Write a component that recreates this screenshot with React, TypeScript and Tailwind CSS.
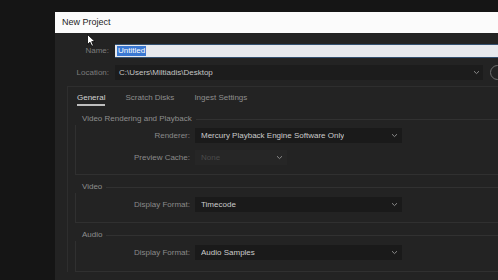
import React from "react";

const line = "bg-[#313131]";

const Chevron = () => (
  <svg width="7" height="5" viewBox="0 0 7 5" className="shrink-0">
    <path d="M1 1.2 L3.5 3.6 L6 1.2" fill="none" stroke="#8a8a8a" strokeWidth="1" />
  </svg>
);

const Select = ({
  value,
  width,
  disabled = false,
}: {
  value: string;
  width: string;
  disabled?: boolean;
}) => (
  <div
    className={`${width} h-[15px] flex items-center justify-between pl-[6px] pr-[4px] ${
      disabled ? "bg-[#262626] text-[#4a4a4a]" : "bg-[#1a1a1a] text-[#cbcbcb]"
    }`}
  >
    <span className="truncate">{value}</span>
    <Chevron />
  </div>
);

const Row = ({ label, children }: { label: string; children: React.ReactNode }) => (
  <div className="flex items-center">
    <div className="w-[119px] pr-[5px] text-right text-[#8a8a8a]">{label}</div>
    {children}
  </div>
);

const Group = ({
  title,
  children,
  body,
}: {
  title: string;
  children: React.ReactNode;
  body: string;
}) => (
  <div className="flex flex-col">
    <div className="flex items-center h-[12px]">
      <span className="pl-[7px] pr-[4px] text-[#8e8e8e]">{title}</span>
      <div className={`flex-1 h-px ${line}`} />
    </div>
    <div className={`border-l border-b border-[#303030] flex flex-col ${body}`}>{children}</div>
  </div>
);

const Cursor = () => (
  <svg
    width="10"
    height="13"
    viewBox="0 0 10 13"
    className="absolute left-[32px] top-[1px]"
  >
    <path
      d="M0.5 0.5 L0.5 10.5 L3 8.2 L4.8 12.2 L6.4 11.5 L4.7 7.6 L8 7.6 Z"
      fill="#fff"
      stroke="#000"
      strokeWidth="0.8"
    />
  </svg>
);

export default function App() {
  return (
    <div
      className="w-[498px] h-[280px] overflow-hidden bg-[#151515] pt-[12px] pl-[55px]"
      style={{ fontFamily: '"Liberation Sans", Arial, sans-serif' }}
    >
      <div className="w-[520px] h-[300px] flex flex-col bg-[#232323] text-[8px]">
        {/* title bar */}
        <div className="h-[21px] shrink-0 bg-[#fbfbfb] flex items-center pl-[7px] text-[9px] text-[#1e1e1e]">
          New Project
        </div>

        <div className="relative flex flex-col">
          <Cursor />
          {/* name */}
          <div className="flex items-center mt-[11px]">
            <div className="w-[54px] text-right text-[#7c7c7c]">Name:</div>
            <div className="ml-[6px] flex-1 h-[14px] bg-[#e7e9ed] border-y border-[#33506f] flex items-center pl-[2px]">
              <span className="bg-[#3a78d2] text-white px-[1px] leading-[10px]">Untitled</span>
            </div>
          </div>

          {/* location */}
          <div className="flex items-center mt-[7px]">
            <div className="w-[54px] text-right text-[#7c7c7c]">Location:</div>
            <div className="ml-[6px] w-[368px] h-[15px] bg-[#1c1c1c] flex items-center justify-between pl-[4px] pr-[3px] text-[#c4c4c4]">
              <span>C:\Users\Miltiadis\Desktop</span>
              <Chevron />
            </div>
            <div className="ml-[7px] w-[15px] h-[15px] rounded-full border border-[#6f6f6f]" />
          </div>

          {/* tab panel */}
          <div className="ml-[12px] mt-[6px] border-l border-t border-[#2e2e2e] flex flex-col">
            <div className="flex pl-[9px] pt-[5px] gap-[20px]">
              <div className="flex flex-col">
                <span className="text-[#d2d2d2] leading-[11px]">General</span>
                <div className="mt-[1px] h-[2px] bg-[#bdbdbd]" />
              </div>
              <span className="text-[#8e8e8e] leading-[11px]">Scratch Disks</span>
              <span className="text-[#8e8e8e] leading-[11px]">Ingest Settings</span>
            </div>

            <div className="ml-[7px] mt-[7px] flex flex-col gap-[6px]">
              <Group title="Video Rendering and Playback" body="pt-[3px] pb-[9px] gap-[7px]">
                <Row label="Renderer:">
                  <Select value="Mercury Playback Engine Software Only" width="w-[207px]" />
                </Row>
                <Row label="Preview Cache:">
                  <Select value="None" width="w-[92px]" disabled />
                </Row>
              </Group>

              <Group title="Video" body="pt-[4px] pb-[10px]">
                <Row label="Display Format:">
                  <Select value="Timecode" width="w-[207px]" />
                </Row>
              </Group>

              <Group title="Audio" body="pt-[4px] pb-[11px]">
                <Row label="Display Format:">
                  <Select value="Audio Samples" width="w-[207px]" />
                </Row>
              </Group>
            </div>
          </div>
        </div>
      </div>
    </div>
  );
}
